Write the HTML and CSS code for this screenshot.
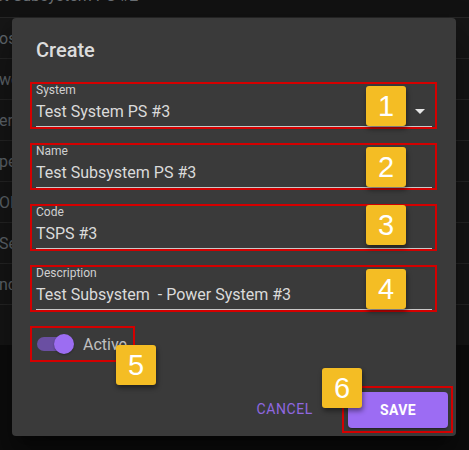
FILE: index.html
```html
<!DOCTYPE html>
<html>
<head>
<meta charset="utf-8">
<link rel="stylesheet" href="styles.css">
</head>
<body>
<div class="page">
  <div class="topbar"><span class="toptext">Test Subsystem PS #2</span></div>
  <div class="rows">
    <div class="row"><span>os</span></div>
    <div class="row"><span>we</span></div>
    <div class="row"><span>erl</span></div>
    <div class="row"><span>pe</span></div>
    <div class="row"><span>OF</span></div>
    <div class="row"><span>Se</span></div>
    <div class="row"><span>nd</span></div>
    <div class="row"><span></span></div>
  </div>
</div>

<div class="dialog">
  <div class="title">Create</div>
  <div class="fields">
    <div class="field">
      <div class="label">System</div>
      <div class="input select">
        <span class="value">Test System PS #3</span>
        <svg class="arrow" viewBox="0 0 24 24" width="24" height="24"><path d="M7 10l5 5 5-5z" fill="#e6e6e6"/></svg>
      </div>
    </div>
    <div class="field">
      <div class="label">Name</div>
      <div class="input"><span class="value">Test Subsystem PS #3</span></div>
    </div>
    <div class="field">
      <div class="label">Code</div>
      <div class="input"><span class="value">TSPS #3</span></div>
    </div>
    <div class="field">
      <div class="label">Description</div>
      <div class="input"><span class="value">Test Subsystem&nbsp; - Power System #3</span></div>
    </div>
    <div class="switchbox">
      <div class="switch"><span class="track"></span><span class="thumb"></span></div>
      <span class="switch-label">Active</span>
    </div>
  </div>
  <div class="footer">
    <button class="cancel">Cancel</button>
    <div class="savebox"><button class="save">Save</button></div>
  </div>

  <div class="badge b1">1</div>
  <div class="badge b2">2</div>
  <div class="badge b3">3</div>
  <div class="badge b4">4</div>
  <div class="badge b5">5</div>
  <div class="badge b6">6</div>
</div>
</body>
</html>
```

FILE: styles.css
```css
html, body {
  margin: 0;
  padding: 0;
}
body {
  width: 469px;
  height: 450px;
  background: #0d0d0d;
  font-family: Roboto, "Noto Sans", sans-serif;
  overflow: hidden;
  position: relative;
}
.page {
  display: flex;
  flex-direction: column;
}
.topbar {
  height: 17px;
  background: #121212;
  overflow: hidden;
  display: flex;
  align-items: flex-start;
}
.toptext {
  margin-top: -14px;
  margin-left: -22px;
  font-size: 16px;
  line-height: 19px;
  color: #6a6f74;
  white-space: nowrap;
}
.rows {
  display: flex;
  flex-direction: column;
  background: #161616;
}
.row {
  height: 40px;
  border-top: 1px solid #262626;
  display: flex;
  align-items: center;
  padding-left: 0;
  font-size: 16px;
  color: #60666c;
  white-space: nowrap;
  overflow: hidden;
}
.row span {
  margin-left: -1px;
}
.dialog {
  position: absolute;
  left: 12px;
  top: 18px;
  width: 444px;
  height: 418px;
  box-sizing: border-box;
  background: #3a3a3a;
  border-radius: 4px;
  box-shadow: 0 11px 15px -7px rgba(0,0,0,0.5), 0 24px 38px 3px rgba(0,0,0,0.35);
  padding: 16px 0 3px 0;
  display: flex;
  flex-direction: column;
}
.title {
  padding-left: 24px;
  font-size: 20px;
  line-height: 32px;
  font-weight: 500;
  color: #dcdcdc;
}
.fields {
  margin-top: 16px;
  padding: 0 19px 0 18px;
  display: flex;
  flex-direction: column;
  gap: 14px;
}
.field {
  height: 47px;
  box-sizing: border-box;
  border: 2px solid #d40000;
  padding: 0 3px 0 4px;
}
.label {
  font-size: 12px;
  line-height: 12px;
  color: #cfcfcf;
}
.input {
  padding-top: 6px;
  padding-bottom: 5px;
  height: 19px;
  border-bottom: 1px solid #c8c8c8;
  display: flex;
  align-items: center;
}
.value {
  font-size: 16px;
  line-height: 19px;
  color: #dadada;
  white-space: pre;
  flex: 1;
}
.arrow {
  margin: -3px 0 -2px 0;
  flex: none;
}
.switchbox {
  width: 105px;
  height: 36px;
  box-sizing: border-box;
  border: 2px solid #d40000;
  display: flex;
  align-items: center;
  padding-left: 5px;
  gap: 9px;
}
.switch {
  position: relative;
  width: 37px;
  height: 20px;
  display: flex;
  align-items: center;
}
.track {
  width: 36px;
  height: 14px;
  border-radius: 7px;
  background: #6a4fa2;
}
.thumb {
  position: absolute;
  left: 17px;
  top: 0;
  width: 20px;
  height: 20px;
  border-radius: 50%;
  background: #9c6df2;
  box-shadow: 0 1px 2px rgba(0,0,0,0.3);
}
.switch-label {
  font-size: 16px;
  line-height: 19px;
  color: #c0c0c0;
}
.footer {
  margin-top: 24px;
  padding-right: 3px;
  display: flex;
  justify-content: flex-end;
  align-items: center;
}
.cancel {
  background: none;
  border: none;
  padding: 6px 8px;
  margin-right: 21px;
  margin-top: -2px;
  font-family: Roboto, sans-serif;
  font-size: 14px;
  font-weight: 400;
  letter-spacing: 0.6px;
  text-transform: uppercase;
  color: #9068e0;
  line-height: 20px;
}
.savebox {
  border: 2px solid #d40000;
  padding: 4px 3px 3px 4px;
  display: flex;
}
.save {
  width: 100px;
  height: 36px;
  border: none;
  border-radius: 4px;
  background: #9c6cf3;
  color: #ffffff;
  font-family: Roboto, sans-serif;
  font-size: 14px;
  font-weight: 700;
  letter-spacing: 0.4px;
  text-transform: uppercase;
  box-shadow: 0 3px 1px -2px rgba(0,0,0,0.2), 0 2px 2px 0 rgba(0,0,0,0.14), 0 1px 5px 0 rgba(0,0,0,0.12);
}
.badge {
  position: absolute;
  width: 40px;
  height: 40px;
  border-radius: 3px;
  background: #f4bd24;
  color: #ffffff;
  font-family: "Liberation Sans", Arial, sans-serif;
  font-size: 29px;
  display: flex;
  align-items: center;
  justify-content: center;
  box-shadow: 1px 3px 5px rgba(0,0,0,0.45);
}
.b1 { left: 354px; top: 68px; }
.b2 { left: 354px; top: 129px; }
.b3 { left: 354px; top: 187px; }
.b4 { left: 354px; top: 251px; }
.b5 { left: 104px; top: 327px; }
.b6 { left: 310px; top: 350px; }
```
